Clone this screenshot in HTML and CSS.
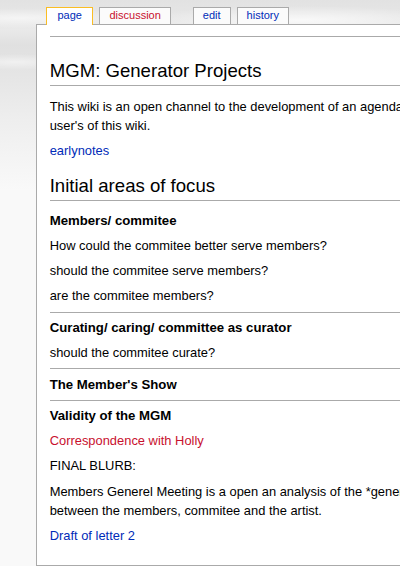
FILE: index.html
```html
<!DOCTYPE html>
<html lang="en">
<head>
<meta charset="utf-8">
<title>MGM: Generator Projects</title>
<link rel="stylesheet" href="styles.css">
</head>
<body>
<div class="page">
  <ul class="tabs">
    <li class="tab selected"><a href="#">page</a></li>
    <li class="tab talk"><a class="new" href="#">discussion</a></li>
    <li class="tab"><a href="#">edit</a></li>
    <li class="tab"><a href="#">history</a></li>
  </ul>
  <div class="content">
    <div class="title-rule"></div>
    <h2>MGM: Generator Projects</h2>
    <p>This wiki is an open channel to the development of an agenda for the Members General Meeting, open to all<br>user's of this wiki.</p>
    <p><a href="#">earlynotes</a></p>
    <h2>Initial areas of focus</h2>
    <h3>Members/ commitee</h3>
    <p>How could the commitee better serve members?</p>
    <p>should the commitee serve members?</p>
    <p>are the commitee members?</p>
    <hr>
    <h3>Curating/ caring/ committee as curator</h3>
    <p>should the commitee curate?</p>
    <hr>
    <h3>The Member's Show</h3>
    <hr>
    <h3>Validity of the MGM</h3>
    <p><a class="new" href="#">Correspondence with Holly</a></p>
    <p>FINAL BLURB:</p>
    <p>Members Generel Meeting is a open an analysis of the *generator* relationship and of the exchange<br>between the members, commitee and the artist.</p>
    <p><a href="#">Draft of letter 2</a></p>
  </div>
</div>
</body>
</html>
```

FILE: styles.css
```css
html {
  overflow: hidden;
}

body {
  margin: 0;
  font-family: "Liberation Sans", Arial, sans-serif;
  color: #000;
  background-color: #f9f9f9;
  background-image:
    radial-gradient(ellipse 160px 14px at 300px 20px, rgba(255,255,255,0.75), rgba(255,255,255,0)),
    radial-gradient(ellipse 120px 10px at 20px 18px, rgba(255,255,255,0.6), rgba(255,255,255,0)),
    radial-gradient(ellipse 60px 8px at 15px 62px, rgba(255,255,255,0.5), rgba(255,255,255,0)),
    linear-gradient(180deg, #e2e2e2 0, #e9e9e9 30px, #e0e0e0 45px, #e6e6e6 80px, #eeeeee 120px, #f9f9f9 190px);
  background-repeat: no-repeat;
}

.page {
  padding: 7px 0 0 36px;
}

.tabs {
  list-style: none;
  margin: 0 0 0 10px;
  padding: 0;
  display: flex;
  align-items: flex-start;
  height: 17px;
  position: relative;
  z-index: 1;
}

.tab {
  height: 16px;
  border: 1px solid #aaa;
  border-bottom: 0;
  background: #fbfbfb;
  padding: 0 9px;
  margin-right: 6px;
  font-size: 11px;
  line-height: 14px;
}

.tab.selected {
  height: 17px;
  background: #fff;
  border-color: #fabd23;
  padding: 0 10.5px;
}

.tab.talk {
  margin-right: 22px;
}

.tab a {
  color: #002bb8;
  text-decoration: none;
}

a {
  color: #002bb8;
  text-decoration: none;
}

a.new {
  color: #c8102e;
}

.content {
  width: 1000px;
  background: #fff;
  border: 1px solid #aaa;
  border-right: 0;
  padding: 0 12.7px 13px 12.7px;
  font-size: 12.9px;
}

.title-rule {
  height: 11px;
  border-bottom: 1px solid #aaa;
  margin-bottom: 15px;
}

h2 {
  font-size: 18.6px;
  font-weight: normal;
  line-height: 22px;
  margin: 0 0 11px 0;
  padding: 8px 0 3px 0;
  border-bottom: 1px solid #aaa;
}

h2 + h3 {
  margin-top: -1px;
}

h3 {
  font-size: 13.2px;
  font-weight: bold;
  line-height: 19px;
  margin: 0 0 6px 0;
  padding: 0;
}

p {
  margin: 5.08px 0 6.35px 0;
  line-height: 19px;
}

hr {
  height: 1px;
  border: 0;
  background: #aaa;
  margin: 6.2px 0 5.3px 0;
}
```
